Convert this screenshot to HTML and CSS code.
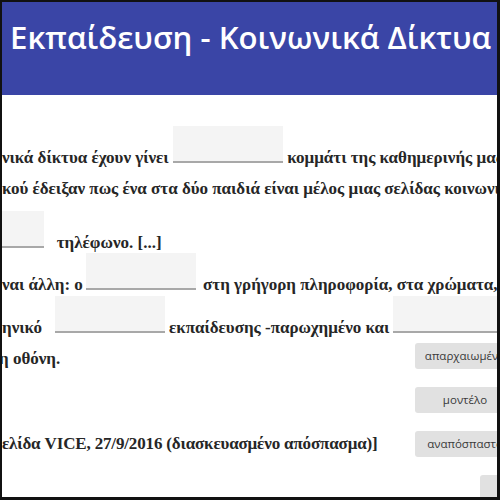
FILE: index.html
```html
<!DOCTYPE html>
<html lang="el">
<head>
<meta charset="utf-8">
<title>Εκπαίδευση - Κοινωνικά Δίκτυα</title>
<link rel="stylesheet" href="styles.css">
</head>
<body>
<div class="frame">
  <header class="topbar">
    <h1 class="title">Εκπαίδευση - Κοινωνικά Δίκτυα</h1>
  </header>
  <main class="content">
    <div class="line">νικά δίκτυα έχουν γίνει <span class="blank w110"></span> κομμάτι της καθημερινής μας ζωής</div>
    <div class="line">κού έδειξαν πως ένα στα δύο παιδιά είναι μέλος μιας σελίδας κοινωνικής</div>
    <div class="line"><span class="blank w42"></span>&nbsp;&nbsp; τηλέφωνο. [...]</div>
    <div class="line">ναι άλλη: ο<span class="blank w110 lead"></span> <span class="after">στη γρήγορη πληροφορία, στα χρώματα, τα</span></div>
    <div class="line">ηνικό &nbsp; <span class="blank w110"></span> εκπαίδευσης -παρωχημένο και <span class="blank w110"></span></div>
    <div class="lower">
      <div class="lines">
        <div class="line cut">η οθόνη.</div>
        <div class="line"></div>
        <div class="line tight">ελίδα VICE, 27/9/2016 (διασκευασμένο απόσπασμα)]</div>
      </div>
      <div class="bank">
        <button class="word">απαρχαιωμένο</button>
        <button class="word">μοντέλο</button>
        <button class="word">αναπόσπαστο</button>
        <button class="word last">ψηφιακό</button>
      </div>
    </div>
  </main>
</div>
</body>
</html>
```
FILE: styles.css
```css
html, body {
  margin: 0;
  padding: 0;
  background: #ffffff;
}
.frame {
  width: 500px;
  height: 500px;
  box-sizing: border-box;
  border-style: solid;
  border-color: #111111;
  border-width: 2px 3px 3px 2px;
  overflow: hidden;
  background: #ffffff;
}
.topbar {
  height: 93px;
  background: #3a45a6;
  padding: 13px 0 0 8px;
  box-sizing: border-box;
}
.title {
  margin: 0;
  font-family: "Open Sans", "Noto Sans", sans-serif;
  font-weight: 600;
  font-size: 31.2px;
  line-height: 44px;
  color: #ffffff;
  white-space: nowrap;
}
.content {
  padding-top: 31px;
  font-family: "Liberation Serif", "DejaVu Serif", serif;
  font-weight: 700;
  font-size: 17px;
  color: #262626;
}
.line {
  height: 42.4px;
  line-height: 42.4px;
  white-space: nowrap;
}
.cut {
  margin-left: -3px;
}
.tight {
  letter-spacing: -0.15px;
}
.lead {
  margin-left: 3px;
}
.after {
  margin-left: 3px;
}
.blank {
  display: inline-block;
  height: 35px;
  background: #f4f4f4;
  border-bottom: 2px solid #a8a8a8;
  vertical-align: baseline;
}
.w110 { width: 110px; }
.w42 { width: 42px; }
.lower {
  display: flex;
}
.lines {
  flex: 1;
  min-width: 0;
}
.bank {
  width: 82px;
  flex: none;
  display: flex;
  flex-direction: column;
  gap: 18px;
  padding-top: 5px;
}
.word {
  width: 100px;
  height: 26px;
  padding: 0;
  border: none;
  border-radius: 3px;
  background: #e1e1e1;
  font-family: "Open Sans", "Noto Sans", sans-serif;
  font-size: 11.5px;
  color: #3a3a3a;
  text-align: center;
  white-space: nowrap;
}
.last {
  margin-left: 65px;
}
```
